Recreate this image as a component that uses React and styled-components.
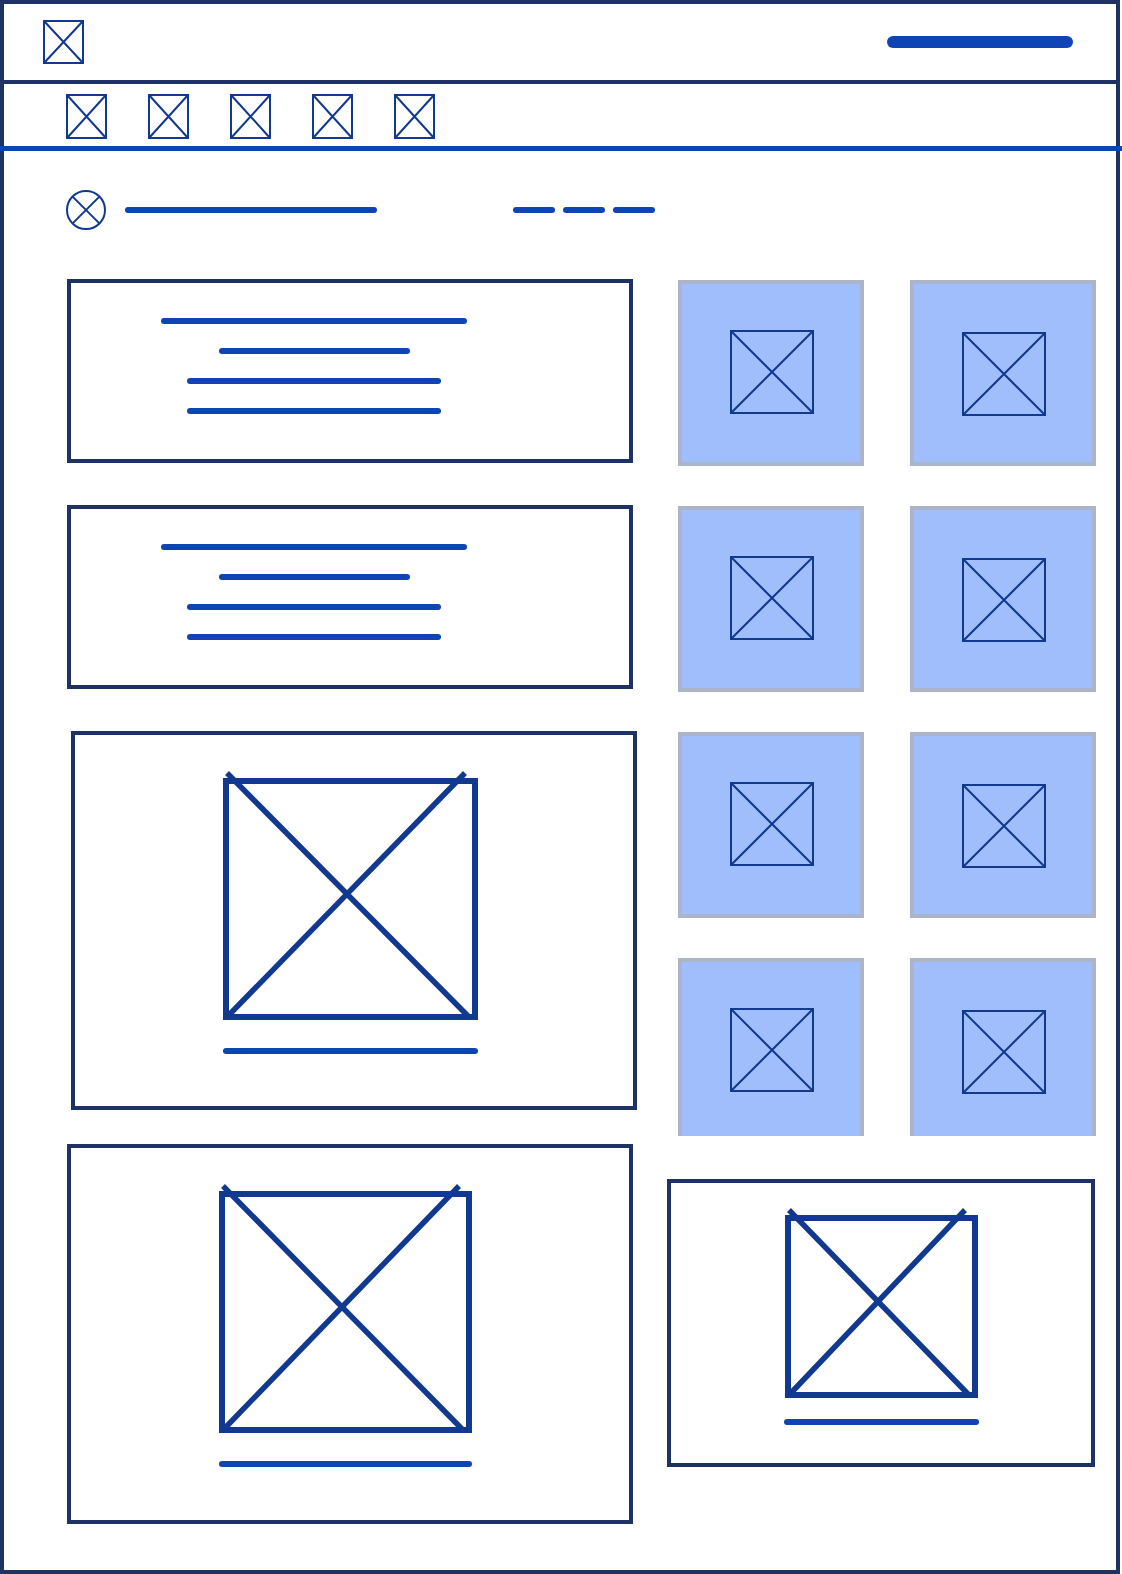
import React from "react";
import styled, { createGlobalStyle } from "styled-components";

const NAVY = "#1f3264";
const INK = "#11398f";
const BLUE = "#0f44b4";
const TILE = "#a1befc";
const TILE_EDGE = "#abb4c8";

const GlobalStyle = createGlobalStyle`
  html, body {
    margin: 0;
    padding: 0;
    background: #fff;
  }
  body {
    font-family: "Liberation Sans", Arial, sans-serif;
    overflow: hidden;
  }
  * {
    box-sizing: border-box;
  }
`;

const Frame = styled.div`
  width: 1120px;
  height: 1574px;
  border: 4px solid ${NAVY};
  background: #fff;
  display: flex;
  flex-direction: column;
`;

const Header = styled.header`
  height: 80px;
  flex: none;
  border-bottom: 4px solid ${NAVY};
  display: flex;
  align-items: center;
  justify-content: space-between;
  padding: 0 43px 0 39px;
`;

const Pill = styled.div`
  width: 186px;
  height: 12px;
  border-radius: 6px;
  background: ${BLUE};
`;

const Nav = styled.nav`
  height: 62px;
  flex: none;
  display: flex;
  align-items: flex-start;
  gap: 41px;
  padding: 10px 0 0 62px;
`;

const Rule = styled.div`
  height: 5px;
  flex: none;
  margin: 0 -6px 0 -4px;
  background: ${BLUE};
`;

const Main = styled.main`
  display: flex;
  flex-direction: column;
  padding: 39px 0 0 62px;
`;

const Crumbs = styled.div`
  display: flex;
  align-items: center;
  height: 40px;
`;

const Bar = styled.div`
  flex: none;
  width: ${(p) => p.$w}px;
  height: ${(p) => p.$h || 6}px;
  border-radius: 3px;
  background: ${BLUE};
`;

const Dashes = styled.div`
  display: flex;
  gap: 8px;
  margin-left: 136px;
`;

const Body = styled.div`
  display: flex;
  margin-top: 49px;
`;

const LeftCol = styled.div`
  width: 570px;
  margin-left: 1px;
  display: flex;
  flex-direction: column;
`;

const TextCard = styled.section`
  width: 566px;
  height: 184px;
  margin-top: ${(p) => p.$top || 0}px;
  border: 4px solid ${NAVY};
  padding: 35px 0 0 90px;
`;

const TextBlock = styled.div`
  width: 306px;
  display: flex;
  flex-direction: column;
  align-items: center;
  gap: 24px;
`;

const PictureCard = styled.section`
  width: 566px;
  height: ${(p) => p.$h || 378}px;
  margin-top: ${(p) => p.$top}px;
  margin-left: ${(p) => p.$left || 0}px;
  border: 4px solid ${NAVY};
  padding: 43px 0 0 148px;
  display: flex;
  flex-direction: column;
  gap: 28px;
`;

const RightCol = styled.div`
  width: 429px;
  margin-left: 30px;
  display: flex;
  flex-direction: column;
`;

const TileGrid = styled.div`
  display: grid;
  grid-template-columns: 186px 186px;
  grid-template-rows: 186px 186px 186px 178px;
  column-gap: 46px;
  row-gap: 40px;
  margin: 1px 0 0 11px;
`;

const Tile = styled.div`
  background: ${TILE};
  border: 4px solid ${TILE_EDGE};
  border-bottom-width: ${(p) => (p.$cut ? 0 : 4)}px;
  padding: ${(p) => (p.$low ? 48 : 46)}px 0 0 48px;
`;

const BottomCard = styled.section`
  width: 428px;
  height: 288px;
  margin-top: 43px;
  border: 4px solid ${NAVY};
  padding-top: 32px;
  display: flex;
  flex-direction: column;
  align-items: center;
  gap: 21px;
`;

const Svg = styled.svg`
  display: block;
  flex: none;
  overflow: visible;
`;

const CrossBox = ({ w, h, sw = 2 }) => {
  const o = sw / 2;
  return (
    <Svg width={w} height={h} viewBox={`0 0 ${w} ${h}`} fill="none" stroke={INK} strokeWidth={sw}>
      <rect x={o} y={o} width={w - sw} height={h - sw} />
      <path strokeLinecap="round" d={`M${o} ${o}L${w - o} ${h - o}M${w - o} ${o}L${o} ${h - o}`} />
    </Svg>
  );
};

const CrossCircle = () => (
  <Svg width={40} height={40} viewBox="0 0 40 40" fill="none" stroke={INK} strokeWidth={2}>
    <circle cx="20" cy="20" r="19" />
    <path d="M6.6 6.6L33.4 33.4M33.4 6.6L6.6 33.4" />
  </Svg>
);

const BigCross = ({ w, h }) => (
  <Svg width={w} height={h} viewBox={`0 0 ${w} ${h}`} fill="none" stroke={INK}>
    <rect x="3" y="3" width={w - 6} height={h - 6} strokeWidth="6" />
    <path
      strokeWidth="5.5"
      d={`M4 -5L${w - 10} ${h - 4}M${w - 13} -5L5 ${h - 4}`}
    />
  </Svg>
);

const TEXT_LINES = [306, 191, 254, 254];
const TILES = [0, 1, 2, 3, 4, 5, 6, 7];

const App = () => {
  return (
    <>
      <GlobalStyle />
      <Frame>
        <Header>
          <CrossBox w={41} h={44} />
          <Pill />
        </Header>
        <Nav>
          {[0, 1, 2, 3, 4].map((i) => (
            <CrossBox key={i} w={41} h={45} />
          ))}
        </Nav>
        <Rule />
        <Main>
          <Crumbs>
            <CrossCircle />
            <Bar $w={252} style={{ marginLeft: 19 }} />
            <Dashes>
              <Bar $w={42} />
              <Bar $w={42} />
              <Bar $w={42} />
            </Dashes>
          </Crumbs>
          <Body>
            <LeftCol>
              {[0, 42].map((top) => (
                <TextCard key={top} $top={top}>
                  <TextBlock>
                    {TEXT_LINES.map((w, i) => (
                      <Bar key={i} $w={w} />
                    ))}
                  </TextBlock>
                </TextCard>
              ))}
              <PictureCard $top={42} $left={4} $h={379}>
                <BigCross w={255} h={242} />
                <Bar $w={255} />
              </PictureCard>
              <PictureCard $top={34} $h={380}>
                <BigCross w={253} h={242} />
                <Bar $w={253} />
              </PictureCard>
            </LeftCol>
            <RightCol>
              <TileGrid>
                {TILES.map((i) => (
                  <Tile key={i} $low={i % 2 === 1} $cut={i > 5}>
                    <CrossBox w={84} h={84} />
                  </Tile>
                ))}
              </TileGrid>
              <BottomCard>
                <BigCross w={193} h={183} />
                <Bar $w={195} />
              </BottomCard>
            </RightCol>
          </Body>
        </Main>
      </Frame>
    </>
  );
};

export default App;
